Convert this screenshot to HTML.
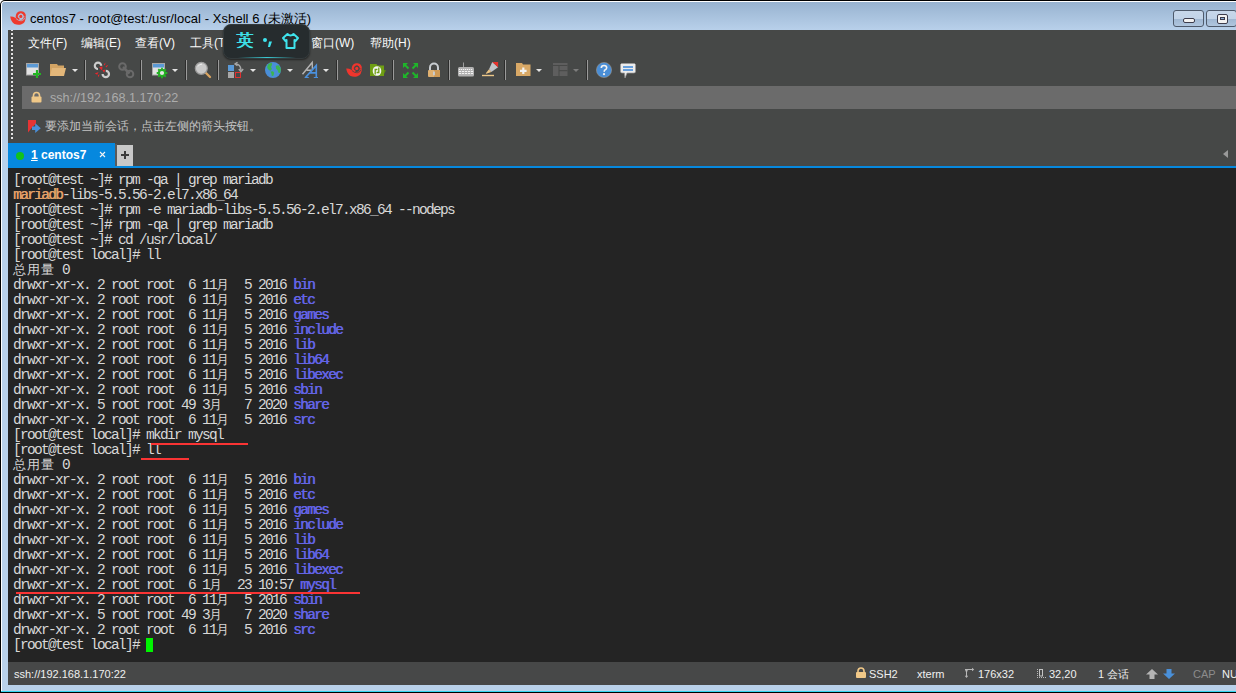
<!DOCTYPE html>
<html><head><meta charset="utf-8">
<style>
*{margin:0;padding:0;box-sizing:border-box}
html,body{width:1236px;height:693px;overflow:hidden;background:#000}
body{position:relative;font-family:"Liberation Sans",sans-serif}
.a{position:absolute}
svg{position:absolute;overflow:visible}
#frame{left:1px;top:1px;width:1235px;height:691px;background:#b9d1ea;border-left:1px solid #fff;border-top:1px solid #fff;border-top-left-radius:4px}
#title{left:2px;top:2px;width:1234px;height:28px;background:linear-gradient(#98b3d0,#b8d0ea);border-top-left-radius:3px}
#ttext{left:30px;top:11px;font-size:13px;letter-spacing:0.06px;color:#000;white-space:pre;line-height:15px}
#dark{left:8px;top:30px;width:1228px;height:138px;background:#464847}
#addr{left:22px;top:86px;width:1214px;height:23px;background:#6b6b6b}
#tabline{left:8px;top:166px;width:1228px;height:2px;background:#0688de}
#tab{left:8px;top:143px;width:107px;height:23px;background:#0688de}
#term{left:8px;top:168px;width:1228px;height:494px;background:#242424}
#status{left:8px;top:662px;width:1228px;height:23px;background:#474848}
#cyan{left:1px;top:691px;width:1235px;height:1px;background:#35d4ef}
#blk{left:0;top:692px;width:1236px;height:1px;background:#000}
.grip{left:11px;width:2px;background:repeating-linear-gradient(#e2e2e2 0 2px,transparent 2px 4px)}
.menu{top:36px;font-size:12px;color:#fafafa;white-space:pre;line-height:15px}
.sep{top:60px;width:2px;height:20px;border-left:1px solid #2c2c2c;background:#9a9a9a}
.dd{top:69px;width:0;height:0;border-left:3px solid transparent;border-right:3px solid transparent;border-top:3px solid #e4e4e4}
.t{position:absolute;left:13px;font-family:"Liberation Mono",monospace;font-size:14.5px;letter-spacing:-1.7px;white-space:pre;color:#d8d8d8;line-height:15px}
.t i{font-style:normal;display:inline-block;width:14px;letter-spacing:0;font-size:13px}
.d{color:#6464e6;text-shadow:0.5px 0 0 #6464e6}
.o{color:#e2a068;text-shadow:0.4px 0 0 #e2a068}
.red{position:absolute;background:#fa3434;height:2px}
.st{top:667px;font-size:11px;color:#f0f0f0;white-space:pre;line-height:14px}
.btn{top:10px;height:17px;border:1px solid #4e5a6b;border-radius:3px;background:linear-gradient(#c7d7ea 0,#c2d4e8 50%,#9fb7d2 52%,#b0c6de 100%)}
</style></head><body>
<div class="a" style="left:0;top:0;width:6px;height:6px;background:#fff"></div>
<div class="a" style="left:0;top:0;width:1236px;height:693px;background:#000;border-top-left-radius:5px"></div>
<div id="frame" class="a"></div>
<div id="title" class="a"></div>
<!-- title icon -->
<svg style="left:8px;top:8px" width="20" height="20" viewBox="0 0 20 20"><path d="M2.2 8.6 Q5 8.4 7.2 9.8 Q9.5 12 12.7 12 Q15.6 11.6 15.8 8.4 L17.9 8.4 Q17.8 14.5 13.5 16.3 Q10 17.5 6.5 16 Q3 14 2.2 8.6 Z" fill="#ee3a2e"/><path d="M16.7 8.4 A3.9 3.9 0 1 0 11.2 11.8" fill="none" stroke="#ee3a2e" stroke-width="2.3"/><circle cx="12.8" cy="8.4" r="1.6" fill="#ee3a2e"/><path d="M8 10.6 Q10.5 13 13.2 12.8 Q16.2 12.3 16.9 9.6" fill="none" stroke="#a9c2de" stroke-width="0.8"/><path d="M10.5 9.6 A2.5 2.5 0 1 1 15.1 9.2" fill="none" stroke="#a9c2de" stroke-width="0.7"/></svg>
<div id="ttext" class="a">centos7 - root@test:/usr/local - Xshell 6 (未激活)</div>
<div class="a btn" style="left:1173px;width:31px"><div class="a" style="left:9px;top:7px;width:12px;height:5px;border:1px solid #3c3c4c;border-radius:2px;background:#f2f2f2"></div></div>
<div class="a btn" style="left:1206px;width:31px"><div class="a" style="left:10px;top:3px;width:11px;height:10px;border:1px solid #3c3c4c;border-radius:2px;background:#f2f2f2"><div class="a" style="left:2px;top:2px;width:5px;height:3px;border:1px solid #3c3c4c;background:#8fb0d8"></div></div></div>
<div id="dark" class="a"></div>
<div class="a grip" style="top:30px;height:109px;background-position:0 -1px"></div>
<!-- menu -->
<div class="a menu" style="left:28px">文件(F)</div>
<div class="a menu" style="left:81px">编辑(E)</div>
<div class="a menu" style="left:135px">查看(V)</div>
<div class="a menu" style="left:190px">工具(T)</div>
<div class="a menu" style="left:245px">选项卡(B)</div>
<div class="a menu" style="left:311px">窗口(W)</div>
<div class="a menu" style="left:370px">帮助(H)</div>
<!-- toolbar -->
<svg style="left:26px;top:63px" width="16" height="16" viewBox="0 0 16 16"><rect x="0.5" y="0.5" width="12" height="11.5" fill="#e2e2e2" stroke="#a8a8a8"/><rect x="1" y="1" width="11" height="3.5" fill="#5b9ad6"/><path d="M7 11 H15 M11 7 V15" stroke="#22b522" stroke-width="2.2"/></svg>
<svg style="left:50px;top:63px" width="17" height="14" viewBox="0 0 17 14"><path d="M0 1 H7 L8 2.5 H14 V13 H0 Z" fill="#d3a464"/><path d="M2 5 H16 L14 13 H0 Z" fill="#e3b77a"/></svg>
<div class="a dd" style="left:72px"></div>
<div class="a sep" style="left:84px"></div>
<svg style="left:94px;top:62px" width="17" height="17" viewBox="0 0 17 17"><path d="M4 7 A3.2 3.2 0 1 1 7.2 3.8 M11.8 8.8 A3.2 3.2 0 1 1 8.6 12" fill="none" stroke="#cdcdcd" stroke-width="2.2"/><path d="M5 5.3 L8.6 4.6 L8 8.6 Z M8.4 8.2 L11.2 7.4 L10.2 10.8 Z M9.8 2.6 L11.4 0.6 L11 3.4 Z M11.5 4.2 L14.2 2.8 L12.6 5.4 Z M0.8 11.6 L4.6 10 L3.2 12.8 Z M3.8 13.2 L5.6 12.2 L4.6 15.2 Z" fill="#e8262c"/></svg>
<svg style="left:118px;top:62px" width="17" height="17" viewBox="0 0 17 17"><circle cx="4.5" cy="4.5" r="3.3" fill="none" stroke="#6a6a6a" stroke-width="2"/><circle cx="12" cy="12" r="3.3" fill="none" stroke="#6a6a6a" stroke-width="2"/><path d="M5 5 L11.5 11.5" stroke="#6a6a6a" stroke-width="2.5"/></svg>
<div class="a sep" style="left:140px"></div>
<svg style="left:152px;top:63px" width="17" height="17" viewBox="0 0 17 17"><rect x="0.5" y="0.5" width="12" height="11.5" fill="#e2e2e2" stroke="#a8a8a8"/><rect x="1" y="1" width="11" height="3.5" fill="#5b9ad6"/><circle cx="10" cy="10" r="3.9" fill="#464847"/><path d="M13.20 10.00 L15.30 10.00 M12.26 12.26 L13.75 13.75 M10.00 13.20 L10.00 15.30 M7.74 12.26 L6.25 13.75 M6.80 10.00 L4.70 10.00 M7.74 7.74 L6.25 6.25 M10.00 6.80 L10.00 4.70 M12.26 7.74 L13.75 6.25" stroke="#22b522" stroke-width="1.8"/><circle cx="10" cy="10" r="2.9" fill="#e4e4e4" stroke="#22b522" stroke-width="1.6"/></svg>
<div class="a dd" style="left:172px"></div>
<div class="a sep" style="left:185px"></div>
<svg style="left:194px;top:61px" width="18" height="17" viewBox="0 0 18 17"><path d="M11.5 11.5 L16 16" stroke="#dba560" stroke-width="2.3" stroke-linecap="round"/><circle cx="7.3" cy="7.3" r="6" fill="#c9c9c9" stroke="#999" stroke-width="1.2"/><path d="M4 5.5 A4 4 0 0 1 8 3.2" fill="none" stroke="#ececec" stroke-width="1"/></svg>
<div class="a sep" style="left:217px"></div>
<svg style="left:228px;top:62px" width="16" height="17" viewBox="0 0 16 17"><rect x="0" y="3" width="6" height="6" fill="#5a9ad8"/><rect x="0" y="10" width="6" height="6" fill="#a8a8a8"/><rect x="7.5" y="10.5" width="5" height="5" fill="none" stroke="#e03030" stroke-width="1"/><path d="M7.5 2 Q12.5 2 13 8" fill="none" stroke="#a8a8a8" stroke-width="1.4"/><path d="M10.8 7 L13 9.5 L15.2 7" fill="none" stroke="#a8a8a8" stroke-width="1.5"/><path d="M9.5 0.2 L7 2 L9.5 3.8" fill="none" stroke="#a8a8a8" stroke-width="1.4"/></svg>
<div class="a dd" style="left:250px"></div>
<svg style="left:265px;top:62px" width="16" height="16" viewBox="0 0 16 16"><circle cx="8" cy="8" r="8" fill="#4a8ed8"/><path d="M3 2.5 Q5 0.8 7.2 1.2 L6.8 3.5 L6 5 L7 7 L5.5 8.8 L3.8 8 L2.3 6 Q2 4 3 2.5 Z M5.5 9.5 L8 9.3 L9.2 10.8 L8.5 13.5 L6.8 14.2 L6.5 12 Z M10.8 3.8 L13.5 3.2 Q15.8 5.5 15.8 8 L15 11 L13.5 10.8 L12.5 8 L11 6.5 Z" fill="#3cb550"/></svg>
<div class="a dd" style="left:287px"></div>
<svg style="left:301px;top:61px" width="18" height="18" viewBox="0 0 18 18"><path d="M1.5 13.3 L11.2 1.5 L11.4 8 M5.7 9.3 H10.8" fill="none" stroke="#b4b4b4" stroke-width="1.4"/><path d="M4.6 16.4 L15.3 4.4 V16.4 M9 11.9 H15.3" fill="none" stroke="#4a90dd" stroke-width="1.6"/><path d="M3.6 16.5 H7.8 M12.8 16.5 H17" stroke="#4a90dd" stroke-width="1.2"/></svg>
<div class="a dd" style="left:323px"></div>
<div class="a sep" style="left:336px"></div>
<svg style="left:344px;top:60px" width="20" height="20" viewBox="0 0 20 20"><path d="M2.2 8.6 Q5 8.4 7.2 9.8 Q9.5 12 12.7 12 Q15.6 11.6 15.8 8.4 L17.9 8.4 Q17.8 14.5 13.5 16.3 Q10 17.5 6.5 16 Q3 14 2.2 8.6 Z" fill="#f0352d"/><path d="M16.7 8.4 A3.9 3.9 0 1 0 11.2 11.8" fill="none" stroke="#f0352d" stroke-width="2.3"/><circle cx="12.8" cy="8.4" r="1.6" fill="#f0352d"/><path d="M8 10.6 Q10.5 13 13.2 12.8 Q16.2 12.3 16.9 9.6" fill="none" stroke="#464847" stroke-width="0.8"/><path d="M10.5 9.6 A2.5 2.5 0 1 1 15.1 9.2" fill="none" stroke="#464847" stroke-width="0.7"/></svg>
<svg style="left:369px;top:63px" width="18" height="14" viewBox="0 0 18 14"><path d="M1 1 H7.5 L8.5 2.5 H15 V13 H1 Z" fill="#6f9e14"/><path d="M15 7 L17 7.3 L15 11 Z" fill="#5e8a10"/><ellipse cx="8" cy="8" rx="4.3" ry="4.8" fill="#f5f5f5"/><path d="M6.2 11.5 V6.5 H8.4 M9.8 4.5 V9.5 H7.6" fill="none" stroke="#6f9e14" stroke-width="1.3"/></svg>
<div class="a sep" style="left:392px"></div>
<svg style="left:403px;top:63px" width="15" height="15" viewBox="0 0 15 15"><path d="M0 0 H5 L0 5 Z M15 0 V5 L10 0 Z M0 15 V10 L5 15 Z M15 15 H10 L15 10 Z" fill="#1fb52a"/><path d="M1.5 1.5 L5.5 5.5 M13.5 1.5 L9.5 5.5 M1.5 13.5 L5.5 9.5 M13.5 13.5 L9.5 9.5" stroke="#1fb52a" stroke-width="2"/></svg>
<svg style="left:427px;top:62px" width="14" height="16" viewBox="0 0 14 16"><path d="M3 8 V5.5 A4 4 0 0 1 11 5.5 V8" fill="none" stroke="#c8ccd0" stroke-width="2"/><rect x="1" y="8" width="12" height="7" rx="1" fill="#e0b070"/><rect x="7" y="8" width="6" height="7" fill="#cf9a56"/><rect x="6.2" y="9.5" width="1.6" height="3.8" fill="#c8d4e4"/></svg>
<div class="a sep" style="left:448px"></div>
<svg style="left:458px;top:62px" width="16" height="15" viewBox="0 0 16 15"><path d="M5.5 0.5 V5" stroke="#9c9c9c" stroke-width="1"/><rect x="0" y="5" width="16" height="9.5" rx="1.5" fill="#b2b2b2"/><path d="M1 7.5 H15" stroke="#f4f4f4" stroke-width="1" stroke-dasharray="1.2 0.8"/><path d="M1 9.5 H15 M1 11.5 H15" stroke="#f4f4f4" stroke-width="1" stroke-dasharray="2.2 0.8"/></svg>
<svg style="left:482px;top:62px" width="17" height="15" viewBox="0 0 17 15"><path d="M10.3 0.1 L16.1 5.3 L9.3 10 L7 7.3 Z" fill="#c0c4c8"/><path d="M10.3 0.1 H16.1 V5.3 Z" fill="#e8322c"/><path d="M7 7.3 L9.3 10 L4.3 11.8 L3.8 11.2 Z" fill="#ecc484"/><path d="M0 13.5 H12" stroke="#ecc888" stroke-width="1.4"/></svg>
<div class="a sep" style="left:504px"></div>
<svg style="left:516px;top:63px" width="15" height="13" viewBox="0 0 15 13"><path d="M0 0 H6 L7 1.5 H14.5 V13 H0 Z" fill="#d8a866"/><path d="M7.3 4.5 V11 M4 7.8 H10.6" stroke="#f2f2f2" stroke-width="2.2"/></svg>
<div class="a dd" style="left:536px"></div>
<svg style="left:553px;top:63px" width="15" height="13" viewBox="0 0 15 13"><rect x="0" y="0" width="14.5" height="13" fill="#5e5e5e"/><path d="M0 2.5 H14.5 M6 2.5 V13 M6 7.7 H14.5" stroke="#474847" stroke-width="1"/></svg>
<div class="a dd" style="left:573px;border-top-color:#7c7c7c"></div>
<div class="a sep" style="left:586px"></div>
<svg style="left:596px;top:62px" width="16" height="16" viewBox="0 0 16 16"><circle cx="8" cy="8" r="7.6" fill="#4a8ed6" stroke="#a89c8c" stroke-width="0.5"/><path d="M5.3 6 Q5.3 3.5 8 3.5 Q10.7 3.5 10.7 5.8 Q10.7 7.3 8.6 8.3 L8 9.8" fill="none" stroke="#f2f2f2" stroke-width="1.6"/><circle cx="8" cy="12.2" r="1.1" fill="#f2f2f2"/></svg>
<svg style="left:620px;top:63px" width="16" height="16" viewBox="0 0 16 16"><path d="M1.5 0.5 H14.5 L15.5 1.5 V9 L14.5 10 H7 L5 15 L4.5 10 H1.5 L0.5 9 V1.5 Z" fill="#ececec" stroke="#9a9a9a" stroke-width="0.7"/><path d="M3 4 H13 M3 7 H13" stroke="#3d86d8" stroke-width="1.6"/></svg>

<div id="addr" class="a"></div>
<svg style="left:31px;top:92px" width="11" height="11" viewBox="0 0 11 11"><path d="M2.5 5 V3.5 A3 3 0 0 1 8.5 3.5 V5" fill="none" stroke="#f0c888" stroke-width="1.6"/><rect x="0.5" y="4.5" width="10" height="6" rx="1" fill="#f0c888"/></svg>
<div class="a" style="left:50px;top:91px;font-size:12.6px;color:#acacac;white-space:pre;line-height:15px">ssh://192.168.1.170:22</div>
<svg style="left:28px;top:120px" width="14" height="14" viewBox="0 0 14 14"><path d="M0 0 H8 V3.5 L4 7.5 L0 12.5 Z" fill="#e63434"/><path d="M4 6.5 H7.2 V3.3 L12.8 8.2 L7.2 13 V10 H4 Z" fill="#4a8ed6"/></svg>
<div class="a" style="left:45px;top:119px;font-size:12px;color:#c4c4c4;white-space:pre;line-height:14px">要添加当前会话，点击左侧的箭头按钮。</div>
<div id="tab" class="a"></div>
<div class="a" style="left:16px;top:152px;width:8px;height:8px;border-radius:50%;background:#12c21a"></div>
<div class="a" style="left:31px;top:148px;font-size:12px;font-weight:bold;color:#fff;white-space:pre;line-height:14px"><u>1</u> centos7</div>
<svg style="left:99px;top:151px" width="8" height="8" viewBox="0 0 8 8"><path d="M1 1 L6 6 M6 1 L1 6" stroke="#f4f4f4" stroke-width="1.1"/></svg>
<div class="a" style="left:115px;top:144px;width:2px;height:22px;background:#5a5a5a"></div>
<div class="a" style="left:117px;top:145px;width:16px;height:21px;background:#c8c8c8"></div>
<div class="a" style="left:121px;top:154px;width:8px;height:2px;background:#3c3c3c"></div>
<div class="a" style="left:124px;top:151px;width:2px;height:8px;background:#3c3c3c"></div>
<div class="a" style="left:1223px;top:150px;width:0;height:0;border-top:4.5px solid transparent;border-bottom:4.5px solid transparent;border-right:5px solid #9a9a9a"></div>
<div id="tabline" class="a"></div>
<div id="term" class="a"></div>
<div class="t" style="top:173px">[root@test ~]# rpm -qa | grep mariadb</div>
<div class="t" style="top:188px"><span class="o">mariadb</span>-libs-5.5.56-2.el7.x86_64</div>
<div class="t" style="top:203px">[root@test ~]# rpm -e mariadb-libs-5.5.56-2.el7.x86_64 --nodeps</div>
<div class="t" style="top:218px">[root@test ~]# rpm -qa | grep mariadb</div>
<div class="t" style="top:233px">[root@test ~]# cd /usr/local/</div>
<div class="t" style="top:248px">[root@test local]# ll</div>
<div class="t" style="top:263px"><i>总</i><i>用</i><i>量</i> 0</div>
<div class="t" style="top:278px">drwxr-xr-x. 2 root root  6 11<i>月</i>  5 2016 <span class="d">bin</span></div>
<div class="t" style="top:293px">drwxr-xr-x. 2 root root  6 11<i>月</i>  5 2016 <span class="d">etc</span></div>
<div class="t" style="top:308px">drwxr-xr-x. 2 root root  6 11<i>月</i>  5 2016 <span class="d">games</span></div>
<div class="t" style="top:323px">drwxr-xr-x. 2 root root  6 11<i>月</i>  5 2016 <span class="d">include</span></div>
<div class="t" style="top:338px">drwxr-xr-x. 2 root root  6 11<i>月</i>  5 2016 <span class="d">lib</span></div>
<div class="t" style="top:353px">drwxr-xr-x. 2 root root  6 11<i>月</i>  5 2016 <span class="d">lib64</span></div>
<div class="t" style="top:368px">drwxr-xr-x. 2 root root  6 11<i>月</i>  5 2016 <span class="d">libexec</span></div>
<div class="t" style="top:383px">drwxr-xr-x. 2 root root  6 11<i>月</i>  5 2016 <span class="d">sbin</span></div>
<div class="t" style="top:398px">drwxr-xr-x. 5 root root 49 3<i>月</i>   7 2020 <span class="d">share</span></div>
<div class="t" style="top:413px">drwxr-xr-x. 2 root root  6 11<i>月</i>  5 2016 <span class="d">src</span></div>
<div class="t" style="top:428px">[root@test local]# mkdir mysql</div>
<div class="t" style="top:443px">[root@test local]# ll</div>
<div class="t" style="top:458px"><i>总</i><i>用</i><i>量</i> 0</div>
<div class="t" style="top:473px">drwxr-xr-x. 2 root root  6 11<i>月</i>  5 2016 <span class="d">bin</span></div>
<div class="t" style="top:488px">drwxr-xr-x. 2 root root  6 11<i>月</i>  5 2016 <span class="d">etc</span></div>
<div class="t" style="top:503px">drwxr-xr-x. 2 root root  6 11<i>月</i>  5 2016 <span class="d">games</span></div>
<div class="t" style="top:518px">drwxr-xr-x. 2 root root  6 11<i>月</i>  5 2016 <span class="d">include</span></div>
<div class="t" style="top:533px">drwxr-xr-x. 2 root root  6 11<i>月</i>  5 2016 <span class="d">lib</span></div>
<div class="t" style="top:548px">drwxr-xr-x. 2 root root  6 11<i>月</i>  5 2016 <span class="d">lib64</span></div>
<div class="t" style="top:563px">drwxr-xr-x. 2 root root  6 11<i>月</i>  5 2016 <span class="d">libexec</span></div>
<div class="t" style="top:578px">drwxr-xr-x. 2 root root  6 1<i>月</i>  23 10:57 <span class="d">mysql</span></div>
<div class="t" style="top:593px">drwxr-xr-x. 2 root root  6 11<i>月</i>  5 2016 <span class="d">sbin</span></div>
<div class="t" style="top:608px">drwxr-xr-x. 5 root root 49 3<i>月</i>   7 2020 <span class="d">share</span></div>
<div class="t" style="top:623px">drwxr-xr-x. 2 root root  6 11<i>月</i>  5 2016 <span class="d">src</span></div>
<div class="t" style="top:638px">[root@test local]# </div>
<div class="red" style="left:151px;top:443px;width:97px"></div>
<div class="red" style="left:141px;top:458px;width:48px"></div>
<div class="red" style="left:16px;top:592px;width:344px"></div>
<div class="a" style="left:146px;top:638px;width:7px;height:14px;background:#00f400"></div>
<div id="status" class="a"></div>
<div class="a st" style="left:14px">ssh://192.168.1.170:22</div>
<svg style="left:856px;top:668px" width="10" height="10" viewBox="0 0 10 10"><path d="M2 4.5 V3 A3 3 0 0 1 8 3 V4.5" fill="none" stroke="#f0c888" stroke-width="1.6"/><rect x="0" y="4" width="10" height="6" rx="1" fill="#f0c888"/></svg>
<div class="a st" style="left:869px">SSH2</div>
<div class="a st" style="left:917px">xterm</div>
<svg style="left:963px;top:667px" width="12" height="12" viewBox="0 0 12 12"><path d="M3.5 2.5 V10 M2 2.5 H10" fill="none" stroke="#b8b8b8" stroke-width="1"/><path d="M1.8 8.8 L3.5 11 L5.2 8.8 Z M9 0.8 L11.2 2.5 L9 4.2 Z M1.8 4.2 L3.5 2 L5.2 4.2 Z" fill="#b8b8b8"/></svg>
<div class="a st" style="left:978px">176x32</div>
<svg style="left:1036px;top:668px" width="12" height="11" viewBox="0 0 12 11"><path d="M1.5 1 V10 M1 9.5 H11" fill="none" stroke="#b8b8b8" stroke-width="1" stroke-dasharray="1 1"/><rect x="3.5" y="1.5" width="3" height="6.5" fill="none" stroke="#c4c4c4" stroke-width="1"/></svg>
<div class="a st" style="left:1049px">32,20</div>
<div class="a st" style="left:1098px">1 会话</div>
<svg style="left:1146px;top:669px" width="12" height="10" viewBox="0 0 12 10"><path d="M6 0 L12 5.5 H8.5 V10 H3.5 V5.5 H0 Z" fill="#b4b4b4"/></svg>
<svg style="left:1163px;top:669px" width="12" height="10" viewBox="0 0 12 10"><path d="M6 10 L12 4.5 H8.5 V0 H3.5 V4.5 H0 Z" fill="#4a90d9"/></svg>
<div class="a st" style="left:1193px;color:#8c8c8c">CAP</div>
<div class="a st" style="left:1222px">NUM</div>
<div id="cyan" class="a"></div>
<div id="blk" class="a"></div>
<!-- IME popup -->
<div class="a" style="left:223px;top:24px;width:87px;height:35px;border-radius:8px;background:#262c2e;border:1px solid #343b3d;box-shadow:0 1px 2px rgba(0,0,0,.5)"></div>
<div class="a" style="left:238px;top:57px;width:58px;height:1px;background:linear-gradient(90deg,rgba(60,220,230,0),rgba(60,220,230,.9),rgba(60,220,230,0))"></div>
<div class="a" style="left:236px;top:31px;font-size:17px;color:#3fe3ec;line-height:20px;text-shadow:0.5px 0 0 #3fe3ec">英</div>
<div class="a" style="left:263px;top:38px;width:4px;height:4px;border-radius:50%;background:#3fe3ec"></div>
<svg style="left:267px;top:41px" width="6" height="7" viewBox="0 0 6 7"><path d="M2 0.5 H5 L3 6 H1 Z" fill="#3fe3ec"/></svg>
<svg style="left:282px;top:33px" width="17" height="16" viewBox="0 0 17 16"><path d="M5.5 1 L1 5 L3.5 8 L4.5 7 V15 H12.5 V7 L13.5 8 L16 5 L11.5 1 Q8.5 4 5.5 1 Z" fill="none" stroke="#3fe3ec" stroke-width="2" stroke-linejoin="round"/></svg>
</body></html>
